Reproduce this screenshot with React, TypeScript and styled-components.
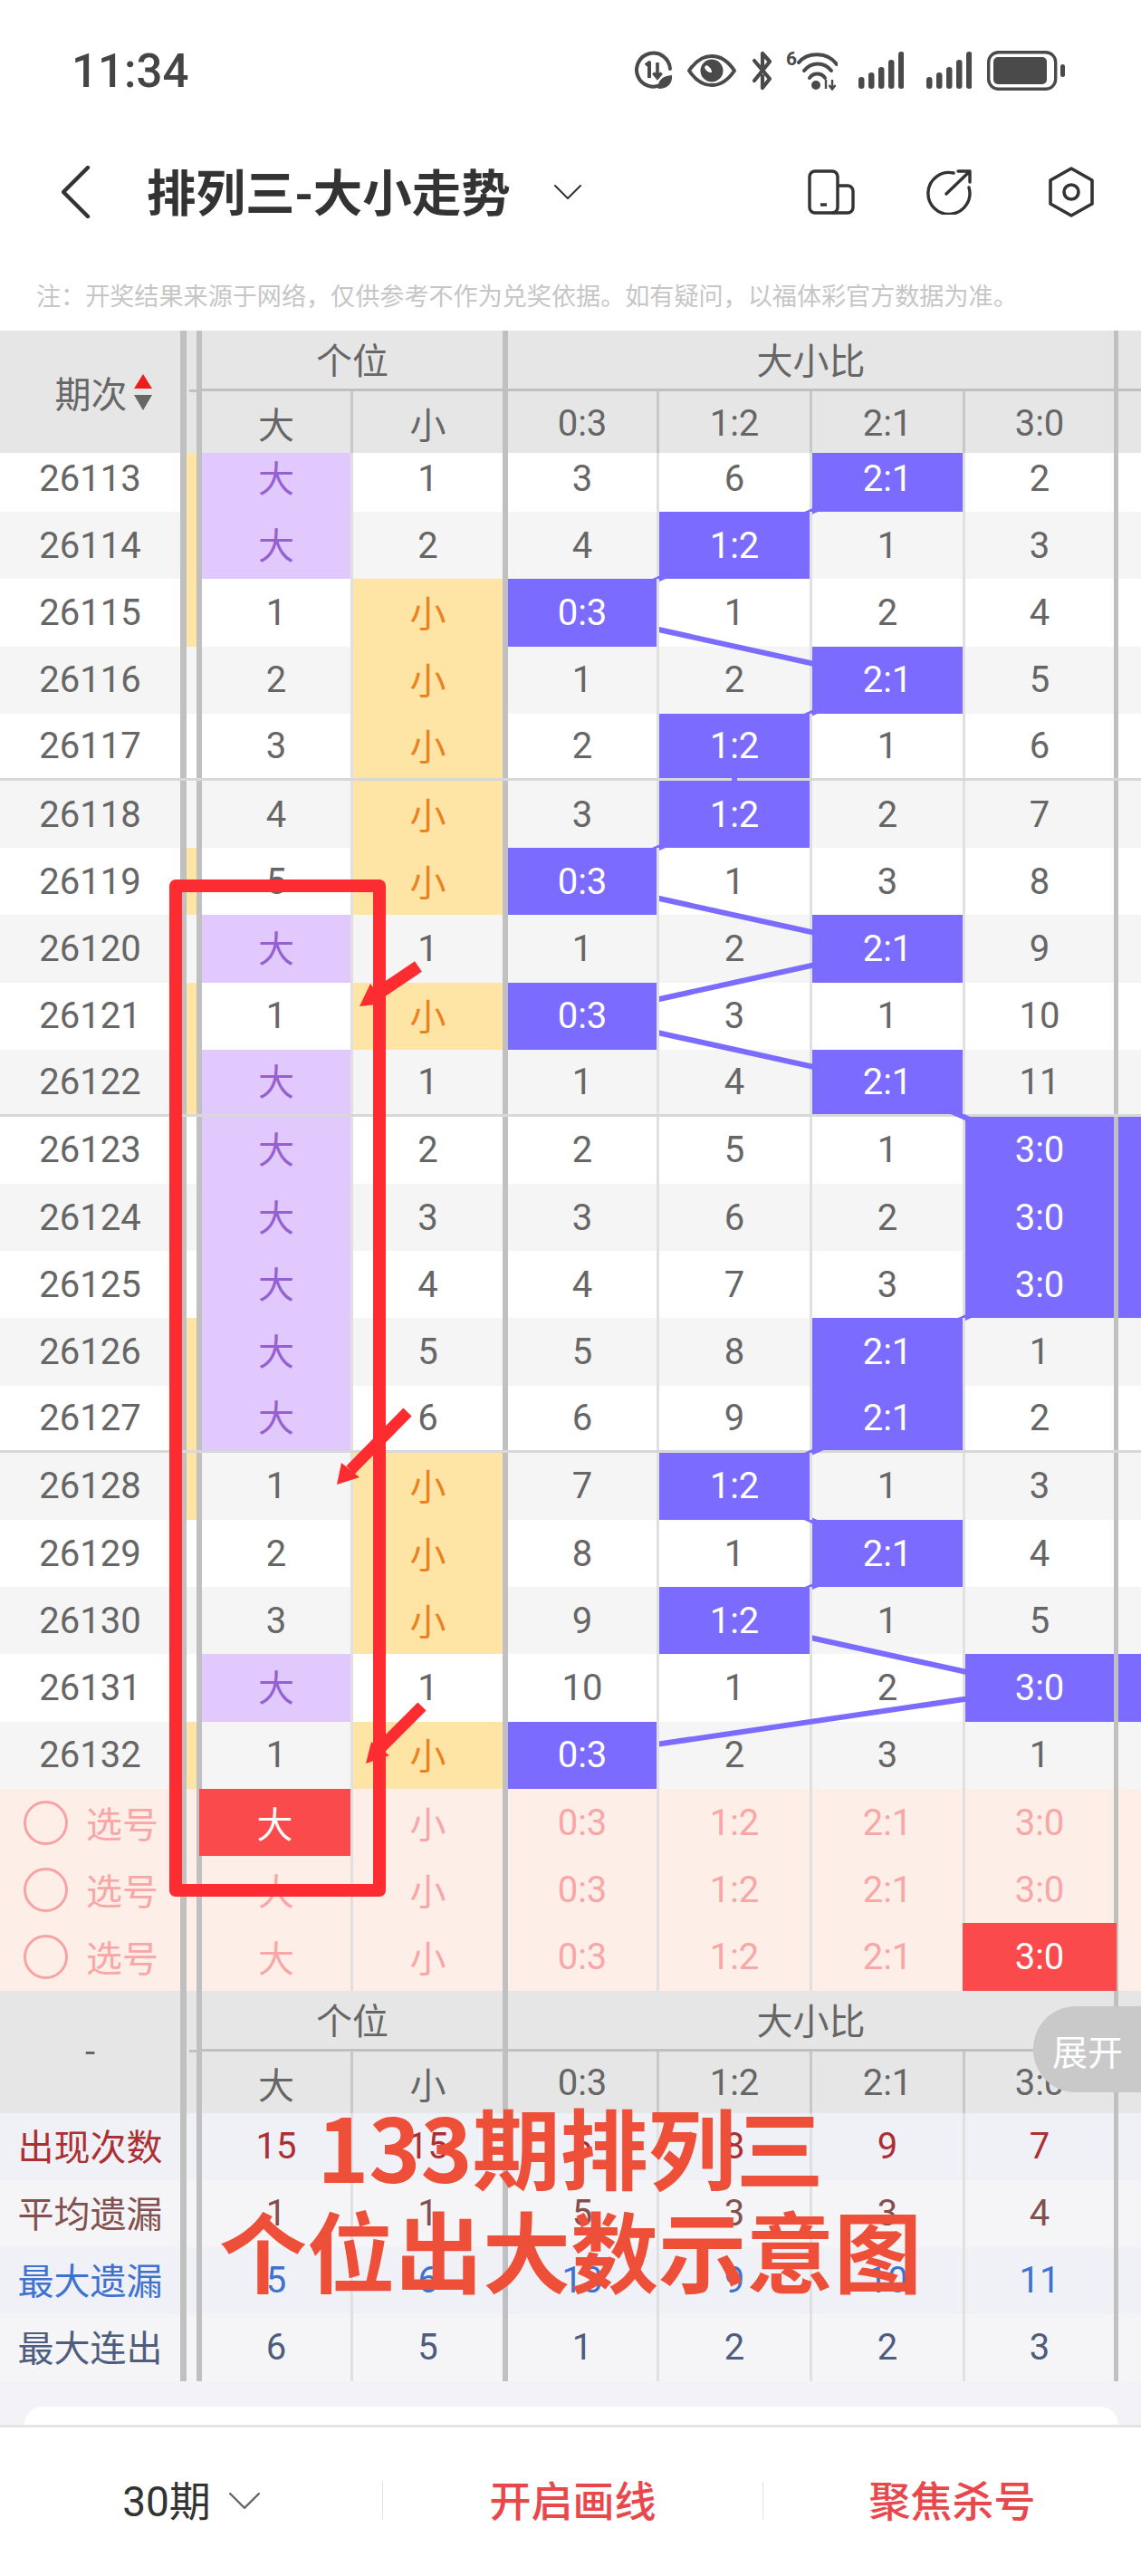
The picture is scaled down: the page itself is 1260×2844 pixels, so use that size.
import React from 'react';
import styled, { createGlobalStyle } from 'styled-components';

const ROW_H = 74.2;
const COLS = '199px 24px 167px 171px 167px 169px 169px 169px 25px';
const RATIO_LABELS = ['0:3', '1:2', '2:1', '3:0'];
const RATIO_CENTERS = [643, 811, 980, 1148];
const EDGES = ['thin', 'thick', 'thin', 'thin', 'thin', 'wide'] as const;

type Edge = (typeof EDGES)[number];
type Draw = {
  issue: number;
  flag: boolean;
  big: string | number;
  small: string | number;
  ratios: (string | number)[];
};

const draw = (
  issue: number,
  flag: number,
  big: string | number,
  small: string | number,
  ratios: (string | number)[],
): Draw => ({ issue, flag: flag === 1, big, small, ratios });

const draws: Draw[] = [
  draw(26113, 1, '大', 1, [3, 6, '2:1', 2]),
  draw(26114, 1, '大', 2, [4, '1:2', 1, 3]),
  draw(26115, 1, 1, '小', ['0:3', 1, 2, 4]),
  draw(26116, 0, 2, '小', [1, 2, '2:1', 5]),
  draw(26117, 0, 3, '小', [2, '1:2', 1, 6]),
  draw(26118, 0, 4, '小', [3, '1:2', 2, 7]),
  draw(26119, 1, 5, '小', ['0:3', 1, 3, 8]),
  draw(26120, 0, '大', 1, [1, 2, '2:1', 9]),
  draw(26121, 1, 1, '小', ['0:3', 3, 1, 10]),
  draw(26122, 1, '大', 1, [1, 4, '2:1', 11]),
  draw(26123, 0, '大', 2, [2, 5, 1, '3:0']),
  draw(26124, 0, '大', 3, [3, 6, 2, '3:0']),
  draw(26125, 0, '大', 4, [4, 7, 3, '3:0']),
  draw(26126, 1, '大', 5, [5, 8, '2:1', 1]),
  draw(26127, 1, '大', 6, [6, 9, '2:1', 2]),
  draw(26128, 1, 1, '小', [7, '1:2', 1, 3]),
  draw(26129, 0, 2, '小', [8, 1, '2:1', 4]),
  draw(26130, 0, 3, '小', [9, '1:2', 1, 5]),
  draw(26131, 0, '大', 1, [10, 1, 2, '3:0']),
  draw(26132, 1, 1, '小', ['0:3', 2, 3, 1]),
];

const stats = [
  { label: '出现次数', tone: '#ab2f33', values: [15, 15, 6, 8, 9, 7] },
  { label: '平均遗漏', tone: '#82504f', values: [1, 1, 5, 3, 3, 4] },
  { label: '最大遗漏', tone: '#3f72cf', values: [5, 6, 13, 9, 10, 11] },
  { label: '最大连出', tone: '#4e5d7d', values: [6, 5, 1, 2, 2, 3] },
];

const GlobalStyle = createGlobalStyle`
  html, body {
    margin: 0;
    padding: 0;
    background: #fff;
    font-family: Roboto, "Noto Sans CJK SC", sans-serif;
  }
`;

const Page = styled.div`
  position: relative;
  width: 1260px;
  height: 2844px;
  display: flex;
  flex-direction: column;
  overflow: hidden;
  background: #fff;
`;

const StatusBar = styled.div`
  height: 156px;
  flex: none;
  display: flex;
  align-items: center;
  justify-content: space-between;
  padding: 0 84px 0 79px;
  box-sizing: border-box;
`;

const Clock = styled.span`
  font-size: 51px;
  font-weight: 500;
  color: #444;
`;

const StatusIcons = styled.div`
  display: flex;
  align-items: center;
`;

const StatusIcon = styled.svg<{ $gap: number }>`
  display: block;
  margin-left: ${(p) => p.$gap}px;
`;

const NavBar = styled.div`
  height: 112px;
  flex: none;
  display: flex;
  align-items: center;
  padding: 0 52px 0 68px;
  box-sizing: border-box;
`;

const Title = styled.h1`
  margin: 0 48px 0 62px;
  padding-bottom: 4px;
  font-family: "Noto Sans CJK SC", sans-serif;
  font-size: 54.5px;
  line-height: 60px;
  font-weight: 700;
  color: #333;
  white-space: nowrap;
`;

const NavActions = styled.div`
  margin-left: auto;
  display: flex;
  align-items: center;
`;

const NavAction = styled.svg<{ $gap?: number }>`
  display: block;
  margin-left: ${(p) => p.$gap ?? 0}px;
`;

const Notice = styled.p`
  height: 97px;
  flex: none;
  margin: 0;
  padding: 18px 0 0 40px;
  box-sizing: border-box;
  display: flex;
  align-items: center;
  font-family: "Noto Sans CJK SC", sans-serif;
  font-size: 27.1px;
  color: #c6c6c6;
  white-space: nowrap;
`;

const HeadGrid = styled.div`
  position: relative;
  flex: none;
  display: grid;
  grid-template-columns: ${COLS};
  grid-template-rows: 67px 68px;
  height: 135px;
  background: #e6e6e6;
  color: #666;
  font-size: 40px;
`;

const HeadCorner = styled.div`
  grid-row: 1 / 3;
  display: flex;
  align-items: center;
  justify-content: center;
`;

const HeadSpine = styled.div`
  position: relative;
  grid-row: 1 / 3;
  box-sizing: border-box;
  border-left: 7px solid #c0c0c0;
  border-right: 6px solid #c0c0c0;

  &::after {
    content: '';
    position: absolute;
    top: 65px;
    left: 3px;
    right: -6px;
    height: 3px;
    background: #c0c0c0;
  }
`;

const HeadGroup = styled.div<{ $span: number; $edge: number }>`
  grid-column: span ${(p) => p.$span};
  display: flex;
  align-items: center;
  justify-content: center;
  box-sizing: border-box;
  padding-bottom: 2px;
  border-bottom: 3px solid #c0c0c0;
  border-right: ${(p) => p.$edge}px solid #c0c0c0;
`;

const HeadBlank = styled.div`
  box-sizing: border-box;
  border-bottom: 3px solid #c0c0c0;
`;

const HeadCell = styled.div<{ $edge: Edge }>`
  display: flex;
  align-items: center;
  justify-content: center;
  box-sizing: border-box;
  padding-top: 2px;
  border-right: ${(p) => (p.$edge === 'thin' ? '3px solid #c8c8c8' : p.$edge === 'thick' ? '6px solid #c0c0c0' : '5px solid #c0c0c0')};
`;

const IssueTitle = styled.span`
  display: flex;
  align-items: center;
  gap: 7px;
  margin-left: 29px;
`;

const SortMark = styled.svg`
  display: block;
`;

const TrendBody = styled.div`
  position: relative;
  height: 1475px;
  flex: none;
  overflow: hidden;
  isolation: isolate;
`;

const TrendRows = styled.div`
  position: relative;
  margin-top: -9px;
`;

const TrendLine = styled.svg`
  position: absolute;
  top: 0;
  left: 0;
  z-index: 1;
  pointer-events: none;
`;

const Row = styled.div<{ $bg: string; $rule?: boolean; $h: number }>`
  display: grid;
  grid-template-columns: ${COLS};
  height: ${(p) => p.$h}px;
  box-sizing: border-box;
  background: ${(p) => p.$bg};
  border-bottom: ${(p) => (p.$rule ? '3px solid #d8d8d8' : 'none')};
`;

const IssueCell = styled.div<{ $color?: string; $lift?: number }>`
  display: flex;
  align-items: center;
  justify-content: center;
  box-sizing: border-box;
  padding-bottom: ${(p) => p.$lift ?? 0}px;
  font-size: 40px;
  color: ${(p) => p.$color ?? '#666'};
`;

const Spine = styled.div<{ $flag?: boolean }>`
  box-sizing: border-box;
  border-left: 7px solid #c0c0c0;
  border-right: 6px solid #c0c0c0;
  background: ${(p) => (p.$flag ? '#fee4a5' : 'transparent')};
`;

const Cell = styled.div<{ $edge: Edge; $fill?: string; $color?: string; $raised?: boolean; $lift?: number }>`
  display: flex;
  align-items: center;
  justify-content: center;
  box-sizing: border-box;
  padding-bottom: ${(p) => p.$lift ?? 0}px;
  font-size: 40px;
  color: ${(p) => p.$color ?? '#666'};
  background: ${(p) => p.$fill ?? 'transparent'};
  border-right: ${(p) => (p.$edge === 'thin' ? '3px solid #e0e0e0' : p.$edge === 'thick' ? '6px solid #c0c0c0' : '5px solid #c0c0c0')};
  position: ${(p) => (p.$raised ? 'relative' : 'static')};
  z-index: ${(p) => (p.$raised ? 2 : 'auto')};
`;

const PickedCell = styled(Cell)`
  position: relative;
  z-index: 2;
  margin-left: -3px;
  color: #fff;
  background: #fb4a4c;
  border-right-width: ${(p) => (p.$edge === 'wide' ? 2 : 3)}px;
`;

const RestCell = styled.div<{ $fill?: string }>`
  background: ${(p) => p.$fill ?? 'transparent'};
`;

const PickLabel = styled.div`
  display: flex;
  align-items: center;
  gap: 20px;
  padding-left: 26px;
  font-size: 40px;
  color: #f8a6a6;
`;

const PickRing = styled.span`
  width: 49px;
  height: 49px;
  box-sizing: border-box;
  border: 3px solid #f7a3a3;
  border-radius: 50%;
`;

const BottomFill = styled.div`
  flex: 1;
  display: flex;
  padding: 28px 25px 0 27px;
  background: #f2f2f7;
`;

const FillCard = styled.div`
  flex: 1;
  background: #fff;
  border-radius: 20px 20px 0 0;
`;

const ToolBar = styled.div`
  height: 167px;
  flex: none;
  display: grid;
  grid-template-columns: 422px 420px 418px;
  align-items: center;
  box-sizing: border-box;
  padding-bottom: 3px;
  border-top: 3px solid #e4e4e4;
  background: #fff;
`;

const ToolItem = styled.div<{ $divided?: boolean; $color?: string }>`
  height: 42px;
  display: flex;
  align-items: center;
  justify-content: center;
  gap: 20px;
  box-sizing: border-box;
  border-left: ${(p) => (p.$divided ? '1px solid #e2e2e2' : 'none')};
  font-size: 46px;
  font-weight: ${(p) => (p.$color ? 500 : 400)};
  color: ${(p) => p.$color ?? '#333'};
`;

const ToolLabel = styled.span`
  position: relative;
  top: -3px;
`;

const ExpandTab = styled.div`
  position: absolute;
  top: 2215px;
  right: 0;
  width: 119px;
  height: 95px;
  display: flex;
  align-items: center;
  padding-left: 21px;
  box-sizing: border-box;
  border-radius: 47px 0 0 47px;
  background: #c9c9c9;
  color: #fff;
  font-size: 39px;
  white-space: nowrap;
`;

const MarkerFrame = styled.div`
  position: absolute;
  top: 971px;
  left: 187px;
  width: 239px;
  height: 1123px;
  box-sizing: border-box;
  border: 14px solid #fc2c30;
  border-radius: 7px;
  pointer-events: none;
`;

const MarkerArrows = styled.svg`
  position: absolute;
  top: 0;
  left: 0;
  pointer-events: none;
`;

const Caption = styled.div`
  position: absolute;
  top: 2311px;
  left: 0;
  right: 0;
  text-align: center;
  font-family: "Noto Sans CJK SC", sans-serif;
  font-size: 97px;
  line-height: 114px;
  font-weight: 700;
  color: #ee4f38;
  white-space: nowrap;
`;

const Signal = ({ gap }: { gap: number }) => (
  <StatusIcon $gap={gap} width="50" height="44" viewBox="0 0 50 44">
    {[13, 18, 24, 32, 41].map((h, i) => (
      <rect key={i} x={i * 11} y={42 - h} width="6.5" height={h} rx="3.2" fill="#4a4a4a" />
    ))}
  </StatusIcon>
);

const StatusCluster = () => (
  <StatusIcons>
    {/* data saver */}
    <StatusIcon $gap={0} width="42" height="44" viewBox="0 0 42 44" fill="none" stroke="#4a4a4a">
      <path d="M30 37 A18.5 18.5 0 1 1 39 20" strokeWidth="4" strokeLinecap="round" />
      <path d="M12 16 L16 13 V30" strokeWidth="4" strokeLinejoin="round" />
      <path d="M25 13 V29 M20.5 24.5 L25 30 L29.5 24.5" strokeWidth="3.6" />
      <path d="M26 42 C25 32 31 28 41 27 C42 36 36 42 26 42 Z" fill="#4a4a4a" stroke="none" />
    </StatusIcon>
    {/* eye comfort */}
    <StatusIcon $gap={16} width="54" height="44" viewBox="0 0 54 44" fill="none">
      <path d="M2 22 C10 10 18 6 27 6 C36 6 44 10 52 22 C44 34 36 38 27 38 C18 38 10 34 2 22 Z" stroke="#4a4a4a" strokeWidth="4" strokeLinejoin="round" />
      <circle cx="27" cy="22" r="12.5" fill="#4a4a4a" />
      <path d="M19 18 C20 22 23 24 27 24 C27 20 24 17 21 16 Z" fill="#fff" />
    </StatusIcon>
    {/* bluetooth */}
    <StatusIcon $gap={17} width="25" height="44" viewBox="0 0 25 44" fill="none" stroke="#4a4a4a">
      <path d="M3 11 L20 31 L12 41 L12 28 M3 33 L20 12 L12 3 L12 16" strokeWidth="4.2" strokeLinejoin="round" strokeLinecap="round" />
    </StatusIcon>
    {/* wifi 6 */}
    <StatusIcon $gap={13} width="57" height="44" viewBox="0 0 57 44" fill="none" stroke="#4a4a4a">
      <text x="0" y="16" fontFamily="Roboto, sans-serif" fontWeight="700" fontSize="21" fill="#4a4a4a" stroke="none">6</text>
      <path d="M14 13 C24 1 46 1 56 15" strokeWidth="4" strokeLinecap="round" />
      <path d="M20 22 C28 12 42 12 50 22" strokeWidth="4" strokeLinecap="round" />
      <path d="M26 30 C30 24 39 24 43 30" strokeWidth="4" strokeLinecap="round" />
      <circle cx="33" cy="38" r="5" fill="#4a4a4a" stroke="none" />
      <path d="M44 42 V32 M51 32 V42 M47.5 38 L51 42.5 L54.5 38" strokeWidth="2.4" />
    </StatusIcon>
    <Signal gap={23} />
    <Signal gap={25} />
    {/* battery */}
    <StatusIcon $gap={17} width="86" height="44" viewBox="0 0 86 44" fill="none">
      <rect x="1.7" y="1.7" width="74" height="40.6" rx="11" stroke="#4a4a4a" strokeWidth="3.4" />
      <rect x="7" y="7" width="59" height="30" rx="5" fill="#4a4a4a" />
      <rect x="81" y="15" width="5" height="14" rx="2.5" fill="#4a4a4a" />
    </StatusIcon>
  </StatusIcons>
);

const BackIcon = () => (
  <svg width="32" height="58" viewBox="0 0 32 58" fill="none" stroke="#333" strokeWidth="4.4" strokeLinecap="round" strokeLinejoin="round">
    <path d="M29 2 L2 29 L29 56" />
  </svg>
);

const Chevron = ({ w, h, color }: { w: number; h: number; color: string }) => (
  <svg width={w} height={h} viewBox="0 0 30 16" fill="none" stroke={color} strokeWidth="2" strokeLinecap="round" strokeLinejoin="round" preserveAspectRatio="none">
    <path d="M1 1 L15 15 L29 1" />
  </svg>
);

const DeviceIcon = () => (
  <NavAction width="52" height="50" viewBox="0 0 52 50" fill="none" stroke="#333" strokeWidth="3.4" strokeLinejoin="round">
    <rect x="2" y="2" width="31" height="46" rx="6" />
    <path d="M33 18 H44 A6 6 0 0 1 50 24 V42 A6 6 0 0 1 44 48 H27" />
    <path d="M14 39 H21" strokeWidth="3.4" />
  </NavAction>
);

const ShareIcon = () => (
  <NavAction $gap={77} width="54" height="50" viewBox="0 0 54 50" fill="none" stroke="#333" strokeWidth="3.4" strokeLinecap="round" strokeLinejoin="round">
    <path d="M32 4 A23 23 0 1 0 49 20" />
    <path d="M24 27 L50 2 M37 2 H50 V14" />
  </NavAction>
);

const HexIcon = () => (
  <NavAction $gap={83} width="50" height="56" viewBox="0 0 50 56" fill="none" stroke="#333" strokeWidth="3.6" strokeLinejoin="round">
    <path d="M25 2 L48 15 V41 L25 54 L2 41 V15 Z" />
    <circle cx="25" cy="28" r="8" />
  </NavAction>
);

const SortIcon = () => (
  <SortMark width="20" height="40" viewBox="0 0 20 40">
    <path d="M10 0 L20 16 H0 Z" fill="#ee1c1c" />
    <path d="M0 23 H20 L10 40 Z" fill="#666" />
  </SortMark>
);

const TableHead = ({ corner }: { corner: React.ReactNode }) => (
  <HeadGrid>
    <HeadCorner>{corner}</HeadCorner>
    <HeadSpine />
    <HeadGroup $span={2} $edge={6}>个位</HeadGroup>
    <HeadGroup $span={4} $edge={5}>大小比</HeadGroup>
    <HeadBlank />
    <HeadCell $edge="thin">大</HeadCell>
    <HeadCell $edge="thick">小</HeadCell>
    {RATIO_LABELS.map((label, i) => (
      <HeadCell key={label} $edge={i === 3 ? 'wide' : 'thin'}>{label}</HeadCell>
    ))}
  </HeadGrid>
);

const digitCell = (value: string | number, edge: Edge) => {
  if (value === '大') return <Cell $edge={edge} $fill="#e1c8fd" $color="#9560cf" $lift={5}>大</Cell>;
  if (value === '小') return <Cell $edge={edge} $fill="#fee4a5" $color="#ea8220" $lift={3}>小</Cell>;
  return <Cell $edge={edge}>{value}</Cell>;
};

const DrawRow = ({ item, index }: { item: Draw; index: number }) => {
  const hitLast = typeof item.ratios[3] === 'string';
  const ruled = index % 5 === 4 && index < draws.length - 1;
  return (
    <Row $h={ROW_H} $bg={index % 2 ? '#f5f5f5' : '#fff'} $rule={ruled}>
      <IssueCell>{item.issue}</IssueCell>
      <Spine $flag={item.flag} />
      {digitCell(item.big, 'thin')}
      {digitCell(item.small, 'thick')}
      {item.ratios.map((value, i) =>
        typeof value === 'string' ? (
          <Cell key={i} $edge={EDGES[i + 2]} $fill="#7b6bff" $color="#fff" $raised>{value}</Cell>
        ) : (
          <Cell key={i} $edge={EDGES[i + 2]}>{value}</Cell>
        ),
      )}
      <RestCell $fill={hitLast ? '#7b6bff' : undefined} />
    </Row>
  );
};

// three blank rows for picking numbers, one cell chosen in the first and last
const PickRow = ({ picked }: { picked: number }) => {
  const labels = ['大', '小', ...RATIO_LABELS];
  return (
    <Row $h={ROW_H} $bg="#fdeee8">
      <PickLabel>
        <PickRing />
        选号
      </PickLabel>
      <Spine />
      {labels.map((label, i) =>
        i === picked ? (
          <PickedCell key={label} $edge={EDGES[i]}>{label}</PickedCell>
        ) : (
          <Cell key={label} $edge={EDGES[i]} $color="#f8a6a6">{label}</Cell>
        ),
      )}
      <RestCell />
    </Row>
  );
};

const linePoints = draws
  .map((item, i) => {
    const hit = item.ratios.findIndex((v) => typeof v === 'string');
    return `${RATIO_CENTERS[hit]},${(i + 0.5) * ROW_H}`;
  })
  .join(' ');

const App = () => (
  <Page>
    <GlobalStyle />
    <StatusBar>
      <Clock>11:34</Clock>
      <StatusCluster />
    </StatusBar>
    <NavBar>
      <BackIcon />
      <Title>排列三-大小走势</Title>
      <Chevron w={30} h={16} color="#333" />
      <NavActions>
        <DeviceIcon />
        <ShareIcon />
        <HexIcon />
      </NavActions>
    </NavBar>
    <Notice>注：开奖结果来源于网络，仅供参考不作为兑奖依据。如有疑问，以福体彩官方数据为准。</Notice>

    <TableHead corner={<IssueTitle>期次<SortIcon /></IssueTitle>} />
    <TrendBody>
      <TrendRows>
        {draws.map((item, i) => (
          <DrawRow key={item.issue} item={item} index={i} />
        ))}
        <TrendLine width="1260" height={draws.length * ROW_H}>
          <polyline points={linePoints} fill="none" stroke="#7b6bff" strokeWidth="6" />
        </TrendLine>
      </TrendRows>
    </TrendBody>
    <PickRow picked={0} />
    <PickRow picked={-1} />
    <PickRow picked={5} />
    <TableHead corner="-" />

    {stats.map((stat, i) => (
      <Row key={stat.label} $h={74} $bg={i % 2 ? '#f5f5f8' : '#f0f1f6'}>
        <IssueCell $color={stat.tone} $lift={4}>{stat.label}</IssueCell>
        <Spine />
        {stat.values.map((value, j) => (
          <Cell key={j} $edge={EDGES[j]} $color={stat.tone}>{value}</Cell>
        ))}
        <RestCell />
      </Row>
    ))}
    <BottomFill>
      <FillCard />
    </BottomFill>
    <ToolBar>
      <ToolItem>
        <ToolLabel>30期</ToolLabel>
        <Chevron w={34} h={18} color="#666" />
      </ToolItem>
      <ToolItem $divided $color="#e8474c"><ToolLabel>开启画线</ToolLabel></ToolItem>
      <ToolItem $divided $color="#e8474c"><ToolLabel>聚焦杀号</ToolLabel></ToolItem>
    </ToolBar>

    <ExpandTab>展开</ExpandTab>

    {/* hand-drawn markup on top of the chart */}
    <MarkerFrame />
    <MarkerArrows width="1260" height="2844" fill="#fc2c30" stroke="none">
      <path d="M462 1067 L416 1098" stroke="#fc2c30" strokeWidth="14" />
      <path d="M397 1111 L409 1086 L425 1108 Z" />
      <path d="M450 1559 L387 1623" stroke="#fc2c30" strokeWidth="13" />
      <path d="M372 1639 L377 1615 L397 1631 Z" />
      <path d="M466 1884 L418 1932" stroke="#fc2c30" strokeWidth="13" />
      <path d="M404 1947 L410 1923 L430 1938 Z" />
    </MarkerArrows>
    <Caption>
      133期排列三
      <br />
      个位出大数示意图
    </Caption>
  </Page>
);

export default App;
